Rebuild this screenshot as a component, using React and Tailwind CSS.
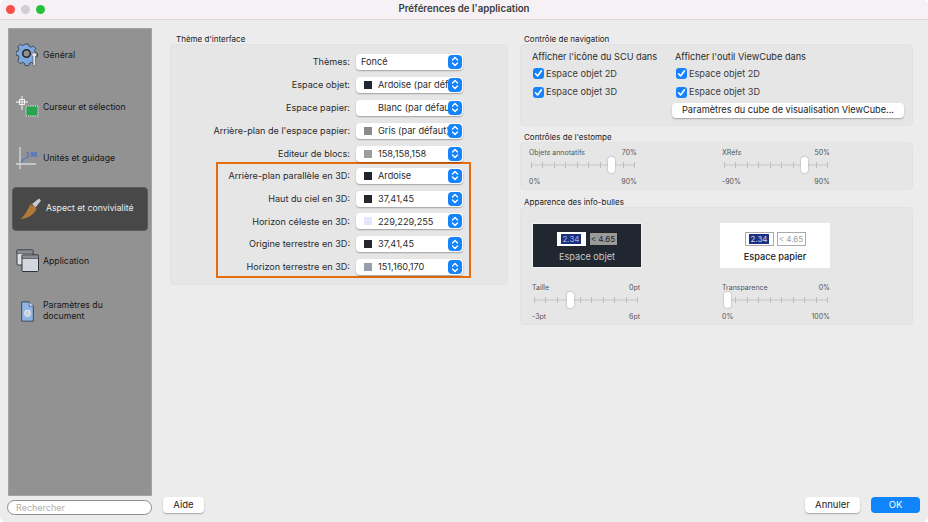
import React from "react";

const Chevrons = () => (
  <span className="flex h-[14px] w-[14px] flex-none items-center justify-center rounded-[4px] bg-[#1583fb]">
    <svg width="8" height="11" viewBox="0 0 8 11" fill="none" stroke="white" strokeWidth="1.4" strokeLinecap="round" strokeLinejoin="round">
      <path d="M1.5 4 L4 1.5 L6.5 4" />
      <path d="M1.5 7 L4 9.5 L6.5 7" />
    </svg>
  </span>
);

const SelectRow = ({ label, value, swatch, tight }) => (
  <div className={`flex items-center ${tight ? "h-[22.8px]" : "h-[23px]"}`}>
    <span className="w-[179px] flex-none whitespace-nowrap text-right text-[9.1px] text-[#2b2b2b]">{label}</span>
    <div className="ml-[6px] flex h-[16px] w-[107px] flex-none items-center overflow-hidden rounded-[4px] bg-white pr-[1px] shadow-[0_1px_1.5px_rgba(0,0,0,0.3)]">
      {swatch !== undefined ? (
        <span className="ml-[8px] h-[8px] w-[8px] flex-none" style={{ backgroundColor: swatch }} />
      ) : (
        <span className="ml-[5px]" />
      )}
      <span className={`min-w-0 flex-1 overflow-hidden whitespace-nowrap text-[9.2px] text-[#2b2b2b] ${swatch !== undefined ? "ml-[6px]" : ""}`}>
        {value}
      </span>
      <Chevrons />
    </div>
  </div>
);

const Check = ({ label }) => (
  <div className="flex h-[18.4px] items-center gap-[2px]">
    <span className="flex h-[11px] w-[11px] items-center justify-center rounded-[3px] bg-[#1583fb]">
      <svg width="9" height="9" viewBox="0 0 9 9" fill="none" stroke="white" strokeWidth="1.6" strokeLinecap="round" strokeLinejoin="round">
        <path d="M1.5 4.8 L3.6 7 L7.5 1.8" />
      </svg>
    </span>
    <span className="text-[9.2px] text-[#3a3a3a]">{label}</span>
  </div>
);

const Slider = ({ name, top, left, right, pos, className = "" }) => (
  <div className={`w-[108px] ${className}`}>
    <div className="flex justify-between text-[7px] leading-[9px] text-[#555]">
      <span>{name}</span>
      <span>{top}</span>
    </div>
    <div className="relative mx-[2px] flex h-[16px] items-center justify-between">
      <div className="absolute left-0 right-0 h-[2px] bg-[#d6d6d6]" />
      {Array.from({ length: 10 }).map((_, i) => (
        <span key={i} className="relative h-[6px] w-[1px] bg-[#bdbdbd]" />
      ))}
      <span className="absolute top-0 h-[16px] w-[7px] rounded-[3px] bg-white shadow-[0_0_2px_rgba(0,0,0,0.35)]" style={{ left: pos }} />
    </div>
    <div className="mt-[4px] flex justify-between text-[7px] leading-[9px] text-[#555]">
      <span>{left}</span>
      <span>{right}</span>
    </div>
  </div>
);

const GearIcon = () => (
  <svg width="24" height="24" viewBox="0 0 24 24">
    <path d="M9 1h3.5l.6 2.4 2 .8 2.2-1.2 2.4 2.4-1.2 2.2.8 2 2.2.6v3.4l-2.4.6-.8 2 1 1.8-2 2.4-2-1-2 .8-.6 2.4H9l-.6-2.4-2-.8-2.2 1.2-2.4-2.4L3 14.6l-.8-2L0 12V8.6l2.2-.6.8-2-1.2-2.2 2.4-2.4L6.4 2.6l2-.8z" fill="#7fa8df" stroke="#2f3640" strokeWidth="0.8" />
    <circle cx="10.5" cy="10.5" r="3.8" fill="#8f8f8f" stroke="#25292e" strokeWidth="1.6" />
    <path d="M17 10c2-.6 3.8.2 4 2l-1.4 1.2V22c0 1.2-2.6 1.2-2.6 0v-8.6L15.6 12c0-1 .4-1.6 1.4-2z" fill="#e8e8e8" stroke="#444" strokeWidth="0.6" />
  </svg>
);

const CursorIcon = () => (
  <svg width="24" height="24" viewBox="0 0 24 24">
    <path d="M6 1v14M0 7h12" stroke="#dcdcdc" strokeWidth="1.4" />
    <rect x="3.5" y="4.5" width="5" height="5" fill="none" stroke="#f2f2f2" strokeWidth="1" />
    <rect x="10" y="11" width="12" height="10" fill="#2aa24f" stroke="#e8e8e8" strokeWidth="1" strokeDasharray="1.2 1" />
  </svg>
);

const UnitsIcon = () => (
  <svg width="24" height="24" viewBox="0 0 24 24">
    <path d="M4 1v22M0 18h20" stroke="#d8d8d8" strokeWidth="1.3" />
    <path d="M5 17c1-3 3-5 7-5.5" stroke="#3f78d8" strokeWidth="1.2" fill="none" />
    <text x="10" y="11" fontSize="5.5" fill="#2e66cc" fontFamily="Inter, sans-serif" fontWeight="600">1.98</text>
  </svg>
);

const BrushIcon = () => (
  <svg width="24" height="24" viewBox="0 0 24 24">
    <path d="M13 7 L20 1.5 L22 3.5 L16.5 10.5 Z" fill="#c9ccd1" />
    <path d="M12 6.5 L17.5 11.5 C16 17 9 21.5 1.5 22 C5 19.5 8 14 12 6.5 Z" fill="#b17a35" />
    <path d="M12 6.5 L14.6 8.9 L12 8.7 Z" fill="#7d5421" />
  </svg>
);

const WindowsIcon = () => (
  <svg width="24" height="24" viewBox="0 0 24 24">
    <rect x="1" y="1" width="16" height="15" rx="1" fill="#dfe2e8" stroke="#3c3f46" />
    <rect x="1" y="1" width="16" height="3.5" fill="#8b8e96" stroke="#3c3f46" strokeWidth="0.6" />
    <rect x="6" y="6" width="16.5" height="16.5" rx="1" fill="#d4d7dd" stroke="#30333a" />
    <rect x="6" y="6" width="16.5" height="3.5" fill="#8b8e96" stroke="#30333a" strokeWidth="0.6" />
  </svg>
);

const DocIcon = () => (
  <svg width="15" height="21" viewBox="0 0 18 24" preserveAspectRatio="none">
    <path d="M2 1h9l5 5v17H2z" fill="#8fb4e6" stroke="#2f3947" />
    <path d="M11 1v5h5" fill="#d7e3f4" stroke="#2f3947" strokeWidth="0.7" />
    <circle cx="9" cy="14" r="3.6" fill="#c9d0d8" stroke="#f0f0f0" strokeWidth="1" />
  </svg>
);

const NavItem = ({ icon, label, className = "" }) => (
  <div className={`flex items-center text-[8.7px] leading-[11px] text-[#161616] ${className}`}>
    <span className="flex w-[31px] flex-none items-center justify-center">{icon}</span>
    <span>{label}</span>
  </div>
);

const Section = ({ title, className = "", titleClass = "pl-[4px]", children }) => (
  <section className={className}>
    <h2 className={`${titleClass} text-[8px] font-normal leading-[9px] text-[#202020]`}>{title}</h2>
    <div className="rounded-[4px] border border-[#e2e2e2] bg-[#e6e6e6]">{children}</div>
  </section>
);

export default function App() {
  return (
    <div className="flex h-[522px] w-[928px] flex-col overflow-hidden rounded-[6px] bg-[#ececec] font-['Inter',sans-serif]">
      {/* title bar */}
      <header className="relative flex h-[20px] flex-none items-center justify-center border-b border-[#dcdadc] bg-[#f5f1f5]">
        <div className="absolute left-[6px] top-[5px] flex gap-[6px]">
          <span className="h-[9px] w-[9px] rounded-full bg-[#fc4f4b]" />
          <span className="h-[9px] w-[9px] rounded-full bg-[#d2cfd2]" />
          <span className="h-[9px] w-[9px] rounded-full bg-[#25c13c]" />
        </div>
        <span className="text-[9.7px] font-semibold text-[#3b3b3b]">Préférences de l'application</span>
      </header>

      <div className="flex min-h-0 flex-1 pl-[8px] pt-[8px]">
        {/* sidebar */}
        <aside className="flex w-[144px] flex-none flex-col">
          <nav className="h-[468px] border border-[#a3a3a3] bg-[#929292] px-[3px]">
            <NavItem icon={<GearIcon />} label="Général" className="mt-[14px] h-[24px]" />
            <NavItem icon={<CursorIcon />} label="Curseur et sélection" className="mt-[28px] h-[24px]" />
            <NavItem icon={<UnitsIcon />} label="Unités et guidage" className="mt-[27px] h-[24px]" />
            <div className="mt-[17px] flex h-[44px] items-center rounded-[4px] border border-[#5a5a5a] bg-[#484848] text-[8.7px] text-[#ececec]">
              <span className="flex w-[33px] flex-none items-center justify-center pl-[3px]"><BrushIcon /></span>
              <span>Aspect et convivialité</span>
            </div>
            <NavItem icon={<WindowsIcon />} label="Application" className="mt-[18px] h-[24px]" />
            <NavItem icon={<DocIcon />} label={<>Paramètres du<br />document</>} className="mt-[26px] h-[24px]" />
          </nav>
          <div className="ml-[-1px] mt-[4px] flex h-[15px] w-[145px] items-center rounded-full border border-[#8e8e8e] bg-white pl-[8px] text-[9px] text-[#b0b0b0]">
            Rechercher
          </div>
        </aside>

        {/* main */}
        <main className="flex min-w-0 flex-1 flex-col">
          <div className="flex flex-1 pl-[18px] pt-[7px]">
            <Section title="Thème d'interface" titleClass="pl-[6px]" className="w-[338px] flex-none self-start">
              <div className="pb-[6px] pt-[5px]">
                <SelectRow label="Thèmes:" value="Foncé" />
                <SelectRow label="Espace objet:" value="Ardoise (par défaut)" swatch="#202731" />
                <SelectRow label="Espace papier:" value="Blanc (par défaut)" swatch="#ffffff" />
                <SelectRow label="Arrière-plan de l'espace papier:" value="Gris (par défaut)" swatch="#8a8a8a" />
                <SelectRow label="Editeur de blocs:" value="158,158,158" swatch="#9e9e9e" />
                <div className="-mt-[3.5px] ml-[45px] box-border h-[116px] w-[255px] border-[2px] border-[#e46c0a] pt-[1px]">
                  <div className="-ml-[47px]">
                    <SelectRow tight label="Arrière-plan parallèle en 3D:" value="Ardoise" swatch="#202731" />
                    <SelectRow tight label="Haut du ciel en 3D:" value="37,41,45" swatch="#25292d" />
                    <SelectRow tight label="Horizon céleste en 3D:" value="229,229,255" swatch="#e5e5ff" />
                    <SelectRow tight label="Origine terrestre en 3D:" value="37,41,45" swatch="#25292d" />
                    <SelectRow tight label="Horizon terrestre en 3D:" value="151,160,170" swatch="#97a0aa" />
                  </div>
                </div>
              </div>
            </Section>

            <div className="ml-[12px] flex w-[393px] flex-none flex-col">
              <Section title="Contrôle de navigation">
                <div className="flex h-[80px] pl-[11px] pt-[5px]">
                  <div className="w-[143px] flex-none">
                    <p className="whitespace-nowrap text-[9.2px] leading-[14px] text-[#2b2b2b]">Afficher l'icône du SCU dans</p>
                    <div className="ml-[1px] mt-[0.5px]">
                      <Check label="Espace objet 2D" />
                      <Check label="Espace objet 3D" />
                    </div>
                  </div>
                  <div className="flex-1">
                    <p className="whitespace-nowrap text-[9.2px] leading-[14px] text-[#2b2b2b]">Afficher l'outil ViewCube dans</p>
                    <div className="ml-[1px] mt-[0.5px]">
                      <Check label="Espace objet 2D" />
                      <Check label="Espace objet 3D" />
                    </div>
                    <div className="-ml-[3px] mt-[1.5px] flex h-[15px] w-[232px] items-center justify-center whitespace-nowrap rounded-[4px] bg-white text-[9.2px] text-[#222] shadow-[0_1px_1.5px_rgba(0,0,0,0.3)]">
                      Paramètres du cube de visualisation ViewCube...
                    </div>
                  </div>
                </div>
              </Section>

              <Section title="Contrôles de l'estompe" className="mt-[7px]">
                <div className="flex h-[46px] pl-[8px] pt-[5px]">
                  <Slider name="Objets annotatifs" top="70%" left="0%" right="90%" pos="77px" />
                  <div className="w-[85px]" />
                  <Slider name="XRéfs" top="50%" left="-90%" right="90%" pos="77px" />
                </div>
              </Section>

              <Section title="Apparence des info-bulles" className="mt-[8px]">
                <div className="flex h-[116px] pl-[11px] pt-[15px]">
                  <div className="w-[110px] flex-none">
                    <div className="flex h-[45px] flex-col items-center border border-[#f2f2f2] bg-[#202731] pt-[8px]">
                      <div className="flex gap-[3px]">
                        <span className="flex h-[14px] w-[29px] items-center justify-center bg-white">
                          <span className="bg-[#1b2f80] px-[1px] text-[8px] leading-[10px] text-[#9db0e8]">2.34</span>
                        </span>
                        <span className="flex h-[14px] w-[29px] items-center justify-center border border-[#222] bg-[#9a9a9a] text-[8px] text-[#222]">&lt; 4.65</span>
                      </div>
                      <span className="mt-[5px] text-[9.2px] leading-[12px] text-[#c8c8c8]">Espace objet</span>
                    </div>
                    <div className="mt-[15px]">
                      <Slider name="Taille" top="0pt" left="-3pt" right="6pt" pos="33px" />
                    </div>
                  </div>
                  <div className="ml-[78px] w-[110px] flex-none">
                    <div className="flex h-[45px] flex-col items-center bg-white pt-[9px]">
                      <div className="flex gap-[3px]">
                        <span className="flex h-[14px] w-[29px] items-center justify-center border border-[#aaa] bg-white">
                          <span className="bg-[#1b2f80] px-[1px] text-[8px] leading-[10px] text-[#c6d2f5]">2.34</span>
                        </span>
                        <span className="flex h-[14px] w-[29px] items-center justify-center border border-[#aaa] bg-white text-[8px] text-[#a0a0a0]">&lt; 4.65</span>
                      </div>
                      <span className="mt-[5px] text-[9.2px] font-medium leading-[12px] text-[#222]">Espace papier</span>
                    </div>
                    <div className="mt-[15px]">
                      <Slider name="Transparence" top="0%" left="0%" right="100%" pos="0px" className="ml-[2px]" />
                    </div>
                  </div>
                </div>
              </Section>
            </div>
          </div>

          {/* footer buttons */}
          <div className="flex h-[25px] flex-none items-start pb-[8px] pl-[11px] pr-[8px]">
            <button className="h-[16px] w-[41px] rounded-[4px] bg-white text-[9.5px] text-[#222] shadow-[0_1px_1.5px_rgba(0,0,0,0.3)]">Aide</button>
            <div className="ml-auto flex gap-[11px]">
              <button className="h-[16px] w-[55px] rounded-[4px] bg-white text-[9.5px] text-[#222] shadow-[0_1px_1.5px_rgba(0,0,0,0.3)]">Annuler</button>
              <button className="h-[16px] w-[49px] rounded-[4px] bg-[#0f84fb] text-[9.5px] text-white">OK</button>
            </div>
          </div>
        </main>
      </div>
    </div>
  );
}
